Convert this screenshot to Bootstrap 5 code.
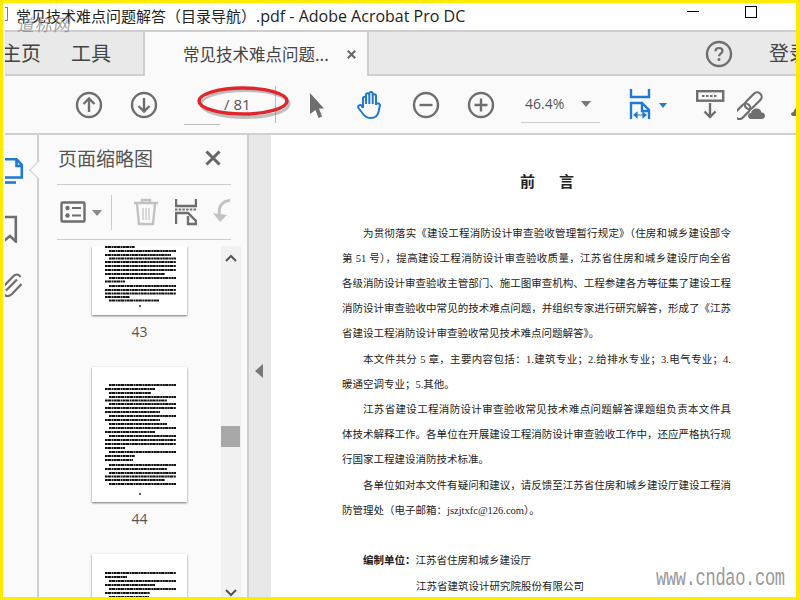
<!DOCTYPE html>
<html lang="zh-CN">
<head>
<meta charset="utf-8">
<title>Adobe Acrobat</title>
<link href="https://cdn.jsdelivr.net/npm/bootstrap@5.3.0/dist/css/bootstrap.min.css" rel="stylesheet">
<style>
html,body{height:100%;margin:0;overflow:hidden}
body{font-family:"Noto Sans CJK SC","Liberation Sans",sans-serif;background:#fff}
.frame{position:relative;width:800px;height:600px;border:solid #ffea00;border-width:3px 4px 3px 3px;overflow:hidden;display:flex;flex-direction:column;background:#fff}
.frame::before{content:"";position:absolute;left:0;top:0;bottom:0;width:2px;background:#fff;z-index:3}
.titlebar{height:29px;flex:none;border-bottom:2px solid #cfcfcf;color:#222;font-size:15px;line-height:26px;white-space:nowrap;overflow:hidden}
.title-lat{font-family:"Open Sans","Liberation Sans",sans-serif;font-size:16px}
.title-ico{width:6px;height:14px;margin:0 8px 0 -1px;border:1px solid #e8564a;border-left:0;flex:none}
.win-min{width:12px;height:1px;background:#000;margin:8px 0 0 0;flex:none}
.win-max{width:12px;height:12px;border:1px solid #000;margin:3px 39px 0 46px;flex:none}
.tabbar{height:44px;flex:none;background:#e9e9e9;border-bottom:2px solid #d0d0d0;color:#444;white-space:nowrap;position:relative}
.tab-txt{font-size:20px;line-height:42px}
.tab-home{margin-left:-2px;width:70px;overflow:hidden;flex:none}
.tab-tools{width:72px;flex:none}
.tab-doc{width:226px;height:44px;flex:none;background:#fafafa;border-left:2px solid #d0d0d0;border-right:2px solid #d0d0d0;font-size:16.5px;line-height:42px;padding-left:38px;color:#444;display:flex;align-items:center}
.tab-doc span{line-height:42px}
.tab-x{margin-left:18px;flex:none}
.login{font-size:20px;line-height:42px;margin-left:36px;color:#444;flex:none}
.help{margin-left:336px;flex:none}
.toolbar{height:59px;flex:none;background:#fafafa;border-bottom:2px solid #d0d0d0;color:#555;position:relative;white-space:nowrap;overflow:hidden}
.tool-ico{flex:none;display:block}
.tb-first{margin-left:72px}
.tb-gap{margin-left:27px}
.tb-arrow{margin-left:32px}
.tb-hand{margin-left:31px}
.tb-minus{margin-left:27px}
.tb-plus{margin-left:27px}
.tb-fit{margin-left:29px}
.tb-kbd{margin-left:21px}
.tb-link{margin-left:11px}
.tb-cloud{margin-left:22px;margin-top:12px}
.pagebox{width:92px;height:37px;margin-left:26px;flex:none;border-right:1px solid #bbb;position:relative;font-size:15px;line-height:37px;padding-left:40px;color:#555;font-family:"Open Sans","Liberation Sans",sans-serif}
.pagebox::after{content:"";position:absolute;left:0;bottom:-2px;width:36px;height:1px;background:#bbb}
.zoombox{width:79px;height:37px;margin-left:26px;flex:none;border-bottom:1px solid #ccc;font-size:14px;line-height:35px;padding-left:4px;color:#555;font-family:"Open Sans","Liberation Sans",sans-serif;position:relative}
.tri{position:absolute;width:0;height:0;border-left:5px solid transparent;border-right:5px solid transparent;border-top:6px solid #777}
.zoombox .tri{left:60px;top:15px}
.mainrow{flex:1;min-height:0;display:flex}
.rail{width:36px;flex:none;background:#fafafa;border-right:2px solid #cfcfcf;position:relative;padding-top:23px}
.rail svg{display:block;margin-left:2px}
.rail-gap{height:29px}
.notch{position:absolute;left:29px;top:28px;width:14px;height:14px;background:#fafafa;border-left:1px solid #cfcfcf;border-bottom:1px solid #cfcfcf;transform:rotate(45deg);z-index:2}
.side{width:210px;flex:none;background:#fafafa;display:flex;flex-direction:column;border-right:2px solid #cfcfcf;overflow:hidden}
.side-head{height:50px;margin:0 16px 0 18px;padding-left:1px;flex:none;border-bottom:1px solid #ccc;font-size:19px;line-height:46px;color:#555}
.side-x{margin:15px 10px 0 0}
.side-tools{height:55px;margin:0 16px 0 18px;flex:none;border-bottom:1px solid #ccc;position:relative;padding-left:3px}
.side-sep{width:1px;height:35px;background:#ccc;margin:0 21px 0 25px;flex:none}
.side-tools .tri{left:35px;top:25px;border-top-color:#888}
.side-list{flex:1;min-height:0;display:flex;margin-top:6px;overflow:hidden}
.thumbs{width:182px;flex:none;overflow:hidden}
.thumb{width:95px;background:#fff;margin-left:53px;box-shadow:0 1px 2px rgba(0,0,0,.55)}
.thumb svg{display:block}
.t-43{height:69px}
.t-44{height:135px}
.t-45{height:60px}
.thumb-num{width:95px;margin-left:53px;text-align:center;font-family:"Open Sans","Liberation Sans",sans-serif;font-size:14px;line-height:20px;color:#555;padding-top:7px;height:52px}
.sbar{width:20px;flex:none;background:#f1f1f1;display:flex;flex-direction:column;align-items:center;position:relative}
.sbar-thumb{position:absolute;left:0;top:180px;width:19px;height:21px;background:#a8a8a8}
.sbar svg:last-child{margin-top:auto}
.collapse-bar{width:22px;flex:none;background:#e8e8e8;display:flex;align-items:center;justify-content:center}
.collapse-bar svg{margin-left:-2px;margin-top:10px}
.docpage{flex:1;min-width:0;background:#fff;padding:33px 0 0 71px;overflow:hidden;color:#222;font-family:"Liberation Serif","Noto Sans CJK SC",serif;font-size:10.5px;line-height:25.2px}
.doc-h{display:flex;gap:24px;padding-left:178px;font-size:15px;font-weight:700;font-family:"Noto Sans CJK SC",sans-serif;line-height:26px;margin-bottom:26.5px}
.dl{width:389px;white-space:nowrap;text-align:justify;text-align-last:justify}
.dl.last{text-align-last:left}
.dl.ind{padding-left:21px}
.org-gap{height:25.5px}
.org{white-space:nowrap;padding-left:21px}
.org b{font-weight:700}
.org-2{padding-left:74px;white-space:nowrap}
.oval{position:absolute;left:192px;top:6px;pointer-events:none}
.wm-top{position:absolute;left:15px;top:12px;color:#8e8e8e;opacity:.8;font-size:17px;letter-spacing:1px;line-height:18px;transform:skewX(-8deg);font-family:"Noto Sans CJK SC",sans-serif}
.wm-bot{position:absolute;left:653px;top:564px;font-family:"Liberation Mono",monospace;color:#999;font-size:17px;line-height:24px;letter-spacing:-.3px;transform:scaleY(1.45)}
</style>
</head>
<body>
<div class="frame">
  <div class="titlebar d-flex align-items-start">
    <span class="title-ico mt-1"></span>
    <span>常见技术难点问题解答（目录导航）<span class="title-lat">.pdf - Adobe Acrobat Pro DC</span></span>
    <span class="win-min ms-auto"></span>
    <span class="win-max"></span>
  </div>
  <div class="tabbar d-flex align-items-start">
    <div class="tab-txt tab-home">主页</div>
    <div class="tab-txt tab-tools">工具</div>
    <div class="tab-doc"><span>常见技术难点问题...</span><svg class="tab-x" width="9" height="9" viewBox="0 0 9 9"><path d="M.8.8l7.400 7.400M8.200.8L.8 8.200" stroke="#666" stroke-width="2"/></svg></div>
    <svg class="help mt-2" width="28" height="28" viewBox="0 0 28 28"><circle cx="14" cy="14" r="12" fill="none" stroke="#6e6e6e" stroke-width="2.4"/><path d="M10.5 11.2c0-2 1.5-3.2 3.5-3.2s3.500 1.200 3.500 3c0 2.600-3.500 2.600-3.500 5.300" fill="none" stroke="#6e6e6e" stroke-width="2.200"/><circle cx="14" cy="19.500" r="1.500" fill="#6e6e6e"/></svg>
    <div class="login">登录</div>
  </div>
  <div class="toolbar d-flex align-items-center">
    <svg class="tool-ico tb-first" width="28" height="28" viewBox="0 0 28 28"><circle cx="14" cy="14" r="12" fill="none" stroke="#6e6e6e" stroke-width="2.400"/><path d="M14 21V8M8.500 13L14 7.500 19.500 13" fill="none" stroke="#6e6e6e" stroke-width="2.400"/></svg>
    <svg class="tool-ico tb-gap" width="28" height="28" viewBox="0 0 28 28"><circle cx="14" cy="14" r="12" fill="none" stroke="#6e6e6e" stroke-width="2.400"/><path d="M14 7v13M8.500 15L14 20.500 19.500 15" fill="none" stroke="#6e6e6e" stroke-width="2.400"/></svg>
    <div class="pagebox">/ 81</div>
    <svg class="tool-ico tb-arrow" width="18" height="28" viewBox="0 0 18 28"><path d="M2 2l14 15.500h-5l3 8-3.500 1.500-3-8L2 23z" fill="#6e6e6e"/></svg>
    <svg class="tool-ico tb-hand" width="28" height="30" viewBox="0 0 28 30"><path d="M6 18V8.500c0-2.500 3-2.500 3 0V14M9 14V5c0-2.500 3.300-2.500 3.300 0V14M12.300 14V3.800c0-2.500 3.400-2.500 3.400 0V14M15.700 14V6c0-2.500 3.300-2.500 3.300 0V15c0-1.500 2.800-2.800 4 0l-1.500 7c-1 4-3.500 6-7.500 6-3.500 0-5.500-1-7.500-3.500L1.500 18c-1.500-2.500 2-4 3.300-2L6 18" fill="none" stroke="#1f7ad0" stroke-width="2"/></svg>
    <svg class="tool-ico tb-minus" width="28" height="28" viewBox="0 0 28 28"><circle cx="14" cy="14" r="12" fill="none" stroke="#6e6e6e" stroke-width="2.400"/><path d="M7.500 14h13" stroke="#6e6e6e" stroke-width="2.400"/></svg>
    <svg class="tool-ico tb-plus" width="28" height="28" viewBox="0 0 28 28"><circle cx="14" cy="14" r="12" fill="none" stroke="#6e6e6e" stroke-width="2.400"/><path d="M7.500 14h13M14 7.500v13" stroke="#6e6e6e" stroke-width="2.400"/></svg>
    <div class="zoombox">46.4%<span class="tri"></span></div>
    <svg class="tool-ico tb-fit" width="46" height="32" viewBox="0 0 46 32"><g fill="none" stroke="#1f7ad0" stroke-width="2.400"><path d="M2 0v8h18V0"/><path d="M2 30V14h11l7 7v9"/><path d="M13 14v8h7"/></g><path d="M5 26h12M5 26l3-2.500v5zM17 26l-3-2.500v5z" fill="#1f7ad0" stroke="#1f7ad0" stroke-width="1.200"/><path d="M30 14h8l-4 5z" fill="#1f7ad0"/></svg>
    <svg class="tool-ico tb-kbd" width="30" height="30" viewBox="0 0 30 30"><rect x="1.200" y="1.200" width="26" height="9.500" fill="none" stroke="#6e6e6e" stroke-width="2.400"/><path d="M6 6h16" stroke="#6e6e6e" stroke-width="2" stroke-dasharray="2.500 1.500"/><path d="M14 13v14M8.500 21.500L14 27l5.500-5.500" fill="none" stroke="#6e6e6e" stroke-width="2.400"/></svg>
    <svg class="tool-ico tb-link" width="32" height="30" viewBox="0 0 32 30"><g fill="none" stroke="#6e6e6e" stroke-width="2.200" transform="rotate(-45 12 15)"><rect x="-6" y="10.500" width="18" height="9" rx="4.500"/><rect x="8" y="10.500" width="20" height="9" rx="4.500"/></g><path d="M14 29c-2 0-3-1.500-3-3s1-3 3-3c.5-3 3-4.500 5.500-4.500s4.500 1.500 5 4c2 0 3.500 1.500 3.500 3.200S26.500 29 24.500 29z" fill="#6e6e6e"/></svg>
    <svg class="tool-ico tb-cloud" width="20" height="14" viewBox="0 0 20 14"><path d="M2 12c-1 0-2-1-2-2s1-2 2.500-2c.5-3 3-5 5.500-5s5 2 5.500 5H16v4z" fill="#6e6e6e"/></svg>
    <svg class="oval" width="102" height="40" viewBox="0 0 102 40"><ellipse cx="50" cy="22" rx="44" ry="13.500" fill="none" stroke="#777" stroke-width="3" opacity=".45"/><ellipse cx="48" cy="19" rx="44" ry="13" fill="none" stroke="#e0262a" stroke-width="3.400"/></svg>
  </div>
  <div class="mainrow">
    <div class="rail">
      <svg width="20" height="28" viewBox="0 0 20 28"><path d="M0 1.300h11.500l5.300 5.500V19.500H0" fill="none" stroke="#1f7ad0" stroke-width="2.600"/><path d="M11.500 1.300V8h5.300" fill="none" stroke="#1f7ad0" stroke-width="2.600"/><path d="M0 24.500h11" stroke="#1f7ad0" stroke-width="2.600"/></svg>
      <div class="rail-gap"></div>
      <svg width="20" height="28" viewBox="0 0 20 28"><path d="M0 2h10.800v24.500L5 21l-5.500 4.500" fill="none" stroke="#6e6e6e" stroke-width="2.600"/></svg>
      <div class="rail-gap"></div>
      <svg width="20" height="28" viewBox="0 0 20 28"><path d="M15.500 5C13.500 1.500 10.500 2 8 4.500L-1 14c-2.500 3-2 6.500 0 8.500 3 2.500 5.500 2 8-.5L16.500 12M12 7.500L1 18.500" fill="none" stroke="#6e6e6e" stroke-width="2.200"/></svg>
      <span class="notch"></span>
    </div>
    <div class="side">
      <div class="side-head d-flex justify-content-between align-items-start">
        <span>页面缩略图</span>
        <svg class="side-x" width="16" height="16" viewBox="0 0 16 16"><path d="M1.500 1.500l13 13M14.500 1.500l-13 13" stroke="#666" stroke-width="3"/></svg>
      </div>
      <div class="side-tools d-flex align-items-center">
        <svg width="26" height="22" viewBox="0 0 26 22"><rect x="1.500" y="1.500" width="23" height="19" rx="1" fill="none" stroke="#6e6e6e" stroke-width="2.400"/><circle cx="7.500" cy="7" r="2.200" fill="#6e6e6e"/><circle cx="7.500" cy="14.500" r="2.200" fill="#6e6e6e"/><path d="M12 7h9M12 14.500h9" stroke="#6e6e6e" stroke-width="2.200"/></svg>
        <span class="tri"></span>
        <span class="side-sep"></span>
        <svg width="26" height="28" viewBox="0 0 26 28"><path d="M1 5h24M9 5V2h8v3" fill="none" stroke="#c2c2c2" stroke-width="2.400"/><path d="M4 6l2 20h14l2-20" fill="none" stroke="#c2c2c2" stroke-width="2.400"/><path d="M10 10v12M13 10v12M16 10v12" stroke="#c2c2c2" stroke-width="1.200"/></svg>
        <svg class="ms-3" width="22" height="28" viewBox="0 0 22 28"><path d="M1 1v7h20V1" fill="none" stroke="#6e6e6e" stroke-width="2.400"/><path d="M0 11.500h22" stroke="#6e6e6e" stroke-width="2" stroke-dasharray="2.500 1.200"/><path d="M1 26V15h12l8 8v3h-8v-8" fill="none" stroke="#6e6e6e" stroke-width="2.400"/></svg>
        <svg class="ms-3" width="18" height="26" viewBox="0 0 18 26"><path d="M17 1.500C10 2 5 7 6.500 15" fill="none" stroke="#c2c2c2" stroke-width="3"/><path d="M0 14l7 9 7-7z" fill="#c2c2c2"/></svg>
      </div>
      <div class="side-list">
        <div class="thumbs">
          <div class="thumb t-43"><svg width="95" height="69" viewBox="0 0 95 69"><path d="M13 1h30M17 5h67M13 9h66M17 12.500h67M13 16h71M13 20h71M13 24h71M13 28h60M17 32h67M13 35.500h20M17 40h67M13 44h71M13 47.500h71M13 51h25M17 54.500h50" fill="none" stroke="#111" stroke-width="1.800" stroke-dasharray="2.400 .3 3.500 .5 1.800 .4"/><path d="M47 60h2" stroke="#222" stroke-width="1.500"/></svg></div>
          <div class="thumb-num">43</div>
          <div class="thumb t-44"><svg width="95" height="135" viewBox="0 0 95 135"><path d="M17 18h67M13 22h50M17 26h42M17 30h67M13 33.500h62M17 37h67M13 41h71M13 45h55M17 49h67M13 53h55M17 57h58M17 61h67M13 65h50M17 69h67M13 73h71M13 77h71M13 81h20M17 85h67M13 89h30M13 93h28M17 98h67M13 102h62M17 106h67M13 109.500h71M13 113h60M17 117h67" fill="none" stroke="#111" stroke-width="1.800" stroke-dasharray="2.400 .3 3.500 .5 1.800 .4"/><path d="M47 127h2" stroke="#222" stroke-width="1.500"/></svg></div>
          <div class="thumb-num">44</div>
          <div class="thumb t-45"><svg width="95" height="60" viewBox="0 0 95 60"><path d="M13 19h71M13 23h22M17 27h67M13 31h50M17 35h67M13 39h45M17 43h40" fill="none" stroke="#111" stroke-width="1.800" stroke-dasharray="2.400 .3 3.500 .5 1.800 .4"/></svg></div>
        </div>
        <div class="sbar">
          <svg class="mt-2" width="12" height="8" viewBox="0 0 12 8"><path d="M1 7l5-5 5 5" fill="none" stroke="#555" stroke-width="2"/></svg>
          <span class="sbar-thumb"></span>
          <svg width="12" height="8" viewBox="0 0 12 8"><path d="M1 1l5 5 5-5" fill="none" stroke="#555" stroke-width="2"/></svg>
        </div>
      </div>
    </div>
    <div class="collapse-bar"><svg width="9" height="14" viewBox="0 0 9 14"><path d="M8 0v14L0 7z" fill="#777"/></svg></div>
    <div class="docpage">
      <div class="doc-h"><span>前</span><span>言</span></div>
      <div class="dl ind">为贯彻落实《建设工程消防设计审查验收管理暂行规定》（住房和城乡建设部令</div>
      <div class="dl">第 51 号），提高建设工程消防设计审查验收质量，江苏省住房和城乡建设厅向全省</div>
      <div class="dl">各级消防设计审查验收主管部门、施工图审查机构、工程参建各方等征集了建设工程</div>
      <div class="dl">消防设计审查验收中常见的技术难点问题，并组织专家进行研究解答，形成了《江苏</div>
      <div class="dl last">省建设工程消防设计审查验收常见技术难点问题解答》。</div>
      <div class="dl ind">本文件共分 5 章，主要内容包括：1.建筑专业；2.给排水专业；3.电气专业；4.</div>
      <div class="dl last">暖通空调专业；5.其他。</div>
      <div class="dl ind">江苏省建设工程消防设计审查验收常见技术难点问题解答课题组负责本文件具</div>
      <div class="dl">体技术解释工作。各单位在开展建设工程消防设计审查验收工作中，还应严格执行现</div>
      <div class="dl last">行国家工程建设消防技术标准。</div>
      <div class="dl ind">各单位如对本文件有疑问和建议，请反馈至江苏省住房和城乡建设厅建设工程消</div>
      <div class="dl last">防管理处（电子邮箱：jszjtxfc@126.com）。</div>
      <div class="org-gap"></div>
      <div class="org"><b>编制单位：</b>江苏省住房和城乡建设厅</div>
      <div class="org-2">江苏省建筑设计研究院股份有限公司</div>
    </div>
  </div>
  <div class="wm-top">道标网</div>
  <div class="wm-bot">www.cndao.com</div>
</div>
</body>
</html>
